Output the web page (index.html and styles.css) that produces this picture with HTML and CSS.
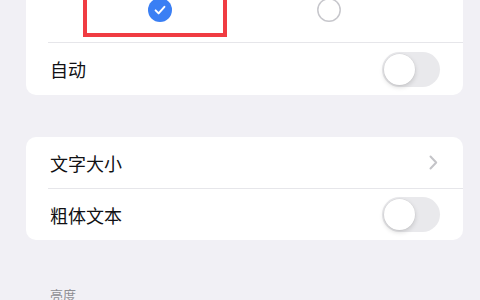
FILE: index.html
```html
<!DOCTYPE html>
<html lang="zh">
<head>
<meta charset="utf-8">
<link rel="stylesheet" href="styles.css">
</head>
<body>
<div class="page">
  <div class="card card-first">
    <div class="appearance">
      <div class="opt">
        <svg class="radio" width="24" height="24" viewBox="0 0 24 24">
          <circle cx="12" cy="12" r="12" fill="#3a7ff4"/>
          <path d="M7.6 12.4 L10.6 15.4 L16.4 8.8" fill="none" stroke="#fff" stroke-width="2" stroke-linecap="round" stroke-linejoin="round"/>
        </svg>
      </div>
      <div class="opt">
        <svg class="radio" width="24" height="24" viewBox="0 0 24 24">
          <circle cx="12" cy="12" r="11.2" fill="none" stroke="#c7c7cc" stroke-width="1.5"/>
        </svg>
      </div>
    </div>
    <div class="divider"></div>
    <div class="row">
      <span class="label">自动</span>
      <span class="toggle"><span class="knob"></span></span>
    </div>
    <div class="redbox"></div>
  </div>

  <div class="card card-second">
    <div class="row">
      <span class="label">文字大小</span>
      <svg class="chev" width="9" height="15" viewBox="0 0 9 15">
        <path d="M1.5 1.5 L7.2 7.5 L1.5 13.5" fill="none" stroke="#c4c4c8" stroke-width="2" stroke-linecap="round" stroke-linejoin="round"/>
      </svg>
    </div>
    <div class="divider"></div>
    <div class="row">
      <span class="label">粗体文本</span>
      <span class="toggle"><span class="knob"></span></span>
    </div>
  </div>

  <div class="section-header">亮度</div>
</div>
</body>
</html>
```

FILE: styles.css
```css
html, body {
  margin: 0;
  padding: 0;
  background: #f1f0f5;
  width: 480px;
  height: 300px;
  overflow: hidden;
  font-family: "Noto Sans CJK SC", "Noto Sans", sans-serif;
  color: #111114;
}

.page {
  padding: 0 17px 0 26px;
}

.card {
  background: #ffffff;
  border-radius: 10px;
  position: relative;
}

.card-first {
  margin-top: -60px;
}

.card-second {
  margin-top: 42px;
}

.appearance {
  height: 102px;
  box-sizing: border-box;
  padding: 0 49.5px 20px;
  display: grid;
  grid-template-columns: 169px 169px;
  align-items: end;
}

.opt {
  display: flex;
  justify-content: center;
}

.radio {
  display: block;
}

.divider {
  height: 1px;
  margin-left: 22px;
  background: #e6e6ea;
}

.row {
  height: 52px;
  display: flex;
  align-items: center;
  justify-content: space-between;
  padding: 0 23px 0 24px;
}

.card-second .row {
  height: 51px;
}

.card-second .row:first-child {
  padding-right: 25px;
}

.label {
  font-size: 18px;
  line-height: 20px;
}

.toggle {
  width: 58px;
  height: 35px;
  border-radius: 18px;
  background: #e9e9ec;
  display: flex;
  align-items: center;
  padding: 2px;
  box-sizing: border-box;
}

.knob {
  width: 31px;
  height: 31px;
  border-radius: 50%;
  background: #ffffff;
  box-shadow: 0 2px 5px rgba(0, 0, 0, 0.16), 0 0 0 0.5px rgba(0, 0, 0, 0.05);
}

.chev {
  display: block;
}

.redbox {
  position: absolute;
  left: 57px;
  top: 0;
  width: 144px;
  height: 97px;
  border: 4px solid #f03c42;
  box-sizing: border-box;
}

.section-header {
  margin-top: 46px;
  padding-left: 24px;
  font-size: 13px;
  line-height: 18px;
  color: #8e8e93;
}
```
